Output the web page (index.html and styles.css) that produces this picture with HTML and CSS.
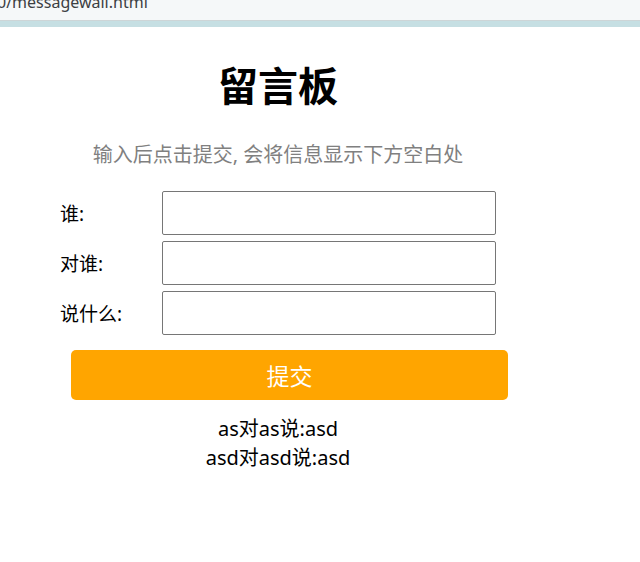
FILE: index.html
```html
<!DOCTYPE html>
<html lang="zh">
<head>
<meta charset="utf-8">
<title>留言板</title>
<link rel="stylesheet" href="styles.css">
</head>
<body>
<div class="chrome"><span class="url">0/messagewall.html</span></div>
<div class="band"></div>
<main class="wall">
  <h1 class="title">留言板</h1>
  <p class="hint">输入后点击提交, 会将信息显示下方空白处</p>
  <form class="form">
    <div class="row"><label class="label">谁:</label><input class="field" type="text"></div>
    <div class="row"><label class="label">对谁:</label><input class="field" type="text"></div>
    <div class="row"><label class="label">说什么:</label><input class="field" type="text"></div>
    <button class="submit" type="button">提交</button>
  </form>
  <div class="messages">
    <div class="msg">as对as说:asd</div>
    <div class="msg">asd对asd说:asd</div>
  </div>
</main>
</body>
</html>
```

FILE: styles.css
```css
html, body {
  margin: 0;
  padding: 0;
  background: #ffffff;
}
body {
  font-family: "Noto Sans", "Noto Sans CJK SC", sans-serif;
  color: #000;
}
.chrome {
  height: 20px;
  background: #f5f8f9;
  border-bottom: 1px solid #cdd5d7;
  overflow: hidden;
}
.url {
  display: block;
  margin: -6px 0 0 -3px;
  font-size: 16px;
  line-height: 16px;
  color: #3c4043;
}
.band {
  height: 6px;
  background: #c6dfe3;
}
.wall {
  margin-left: 8px;
  width: 540px;
}
.title {
  margin: 33px 0 0;
  font-family: "Noto Sans CJK SC", sans-serif;
  font-size: 40px;
  line-height: 48px;
  font-weight: 700;
  text-align: center;
}
.hint {
  margin: 34px 0 0;
  font-size: 20px;
  line-height: 26px;
  color: #808080;
  text-align: center;
}
.form {
  margin: 23px 0 0;
  display: flex;
  flex-direction: column;
  gap: 6px;
}
.row {
  display: flex;
  align-items: center;
  padding-left: 52px;
}
.label {
  width: 102px;
  font-size: 19px;
}
.field {
  box-sizing: border-box;
  width: 334px;
  height: 44px;
  margin: 0;
  border: 1px solid #767676;
  border-radius: 2px;
  background: #fff;
}
.submit {
  margin: 9px 0 0 63px;
  width: 437px;
  height: 50px;
  border: none;
  border-radius: 5px;
  background: #ffa500;
  color: #fff;
  font-family: "Noto Sans", "Noto Sans CJK SC", sans-serif;
  font-size: 23px;
  padding: 0;
}
.messages {
  margin-top: 14px;
  text-align: center;
  font-size: 20px;
  line-height: 29px;
}
```
